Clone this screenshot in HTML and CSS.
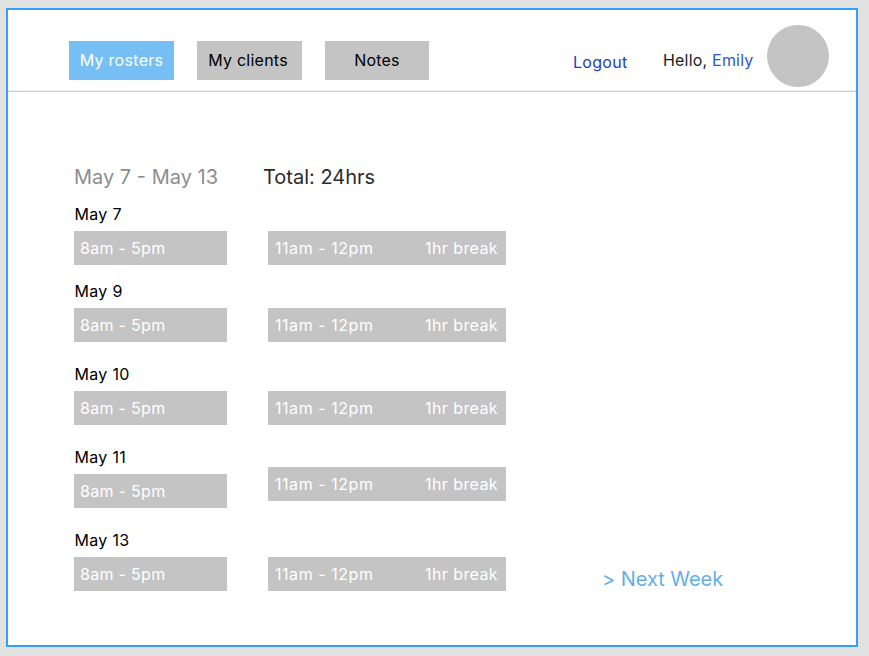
FILE: index.html
```html
<!DOCTYPE html>
<html lang="en">
<head>
<meta charset="utf-8">
<title>My rosters</title>
<link rel="stylesheet" href="styles.css">
</head>
<body>
<div class="frame">
  <header class="header">
    <nav class="tabs">
      <a class="tab tab-active">My rosters</a>
      <a class="tab tab-clients">My clients</a>
      <a class="tab tab-notes">Notes</a>
    </nav>
    <a class="logout">Logout</a>
    <p class="greeting">Hello, <a class="user">Emily</a></p>
    <div class="avatar"></div>
  </header>
  <main class="main">
    <section class="roster">
      <div class="summary">
        <h1 class="range">May 7 - May 13</h1>
        <p class="total">Total: 24hrs</p>
      </div>
      <div class="day day-first">
        <h2 class="date">May 7</h2>
        <div class="bar">8am - 5pm</div>
        <div class="bar bar-break"><span class="time">11am - 12pm</span><span>1hr break</span></div>
      </div>
      <div class="day">
        <h2 class="date">May 9</h2>
        <div class="bar">8am - 5pm</div>
        <div class="bar bar-break"><span class="time">11am - 12pm</span><span>1hr break</span></div>
      </div>
      <div class="day">
        <h2 class="date">May 10</h2>
        <div class="bar">8am - 5pm</div>
        <div class="bar bar-break"><span class="time">11am - 12pm</span><span>1hr break</span></div>
      </div>
      <div class="day">
        <h2 class="date">May 11</h2>
        <div class="bar">8am - 5pm</div>
        <div class="bar bar-break bar-raised"><span class="time">11am - 12pm</span><span>1hr break</span></div>
      </div>
      <div class="day">
        <h2 class="date">May 13</h2>
        <div class="bar">8am - 5pm</div>
        <div class="bar bar-break"><span class="time">11am - 12pm</span><span>1hr break</span></div>
      </div>
    </section>
    <a class="next">&gt; Next Week</a>
  </main>
</div>
</body>
</html>
```
FILE: styles.css
```css
* { box-sizing: border-box; }
body {
  margin: 0;
  padding: 8px 0 0 6px;
  height: 656px;
  overflow: hidden;
  background: #e1e1e1;
  font: 400 16px/20px Inter, "Liberation Sans", sans-serif;
  letter-spacing: 0.3px;
  color: #000;
}
h1, h2, p { margin: 0; font-weight: 400; }
.frame {
  width: 852px;
  height: 639px;
  border: 2px solid #369ffd;
  background: #fff;
}
.header {
  display: flex;
  height: 82px;
  padding: 15px 0 0 61px;
  border-bottom: 1px solid #cfcfcf;
  box-shadow: inset 0 -1px #ededed;
}
.tabs { display: flex; gap: 23px; margin-top: 16px; width: 504px; }
.tab {
  width: 105px;
  height: 39px;
  background: #c4c4c4;
  line-height: 39px;
  text-align: center;
}
.tab-active { background: #75bff5; color: #fff; }
.tab-clients { padding-right: 3px; letter-spacing: 0.25px; }
.tab-notes { width: 104px; letter-spacing: 0.2px; }
.logout { width: 90px; margin-top: 27px; color: #1a3fc0; }
.greeting {
  width: 104px;
  margin-top: 25px;
  letter-spacing: 0.2px;
  color: #1a1a1a;
  white-space: nowrap;
}
.user { color: #2f55cc; }
.avatar {
  width: 62px;
  height: 62px;
  border-radius: 50%;
  background: #c4c4c4;
}
.main { display: flex; align-items: flex-end; padding: 73px 0 0 66px; }
.roster { width: 528px; }
.summary {
  display: grid;
  grid-template-columns: 189px 1fr;
  height: 39px;
  font-size: 20px;
  line-height: 24px;
  letter-spacing: 0;
}
.range { font-size: 20px; color: #8d8d8d; }
.total { color: #2b2b2b; }
.day {
  display: grid;
  grid-template-columns: 153px 238px;
  grid-template-rows: 27px 34px;
  column-gap: 41px;
  margin-top: 22px;
}
.day-first { margin-top: 0; }
.day-first + .day { margin-top: 16px; }
.date { grid-column: 1 / -1; padding-left: 0.5px; font-size: 16px; }
.bar {
  padding: 0 6px;
  background: #c4c4c4;
  color: #fff;
  line-height: 35px;
}
.bar-break { display: flex; justify-content: space-between; padding: 0 8px 0 7px; letter-spacing: 0.4px; }
.time { letter-spacing: 0.55px; }
.bar-raised { margin: -7px 0 7px; }
.next { font-size: 20px; line-height: 24px; letter-spacing: -0.05px; color: #62afe9; }
```
